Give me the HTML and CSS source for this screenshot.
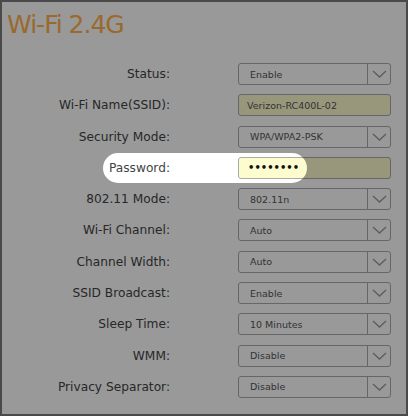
FILE: index.html
```html
<!DOCTYPE html>
<html>
<head>
<meta charset="utf-8">
<link rel="stylesheet" href="styles.css">
</head>
<body>
<div class="screen">
  <div class="frame">
    <h1 class="title">Wi-Fi 2.4G</h1>
    <div class="form">
      <div class="label">Status:</div>
      <div class="select"><span class="val">Enable</span><span class="arrow"><svg width="15" height="8" viewBox="0 0 15 8"><path d="M1 1 L7.5 7 L14 1" fill="none" stroke="#9a9a9a" stroke-width="1.3"/></svg></span></div>

      <div class="label">Wi-Fi Name(SSID):</div>
      <div class="input"><span class="val">Verizon-RC400L-02</span></div>

      <div class="label">Security Mode:</div>
      <div class="select"><span class="val">WPA/WPA2-PSK</span><span class="arrow"><svg width="15" height="8" viewBox="0 0 15 8"><path d="M1 1 L7.5 7 L14 1" fill="none" stroke="#9a9a9a" stroke-width="1.3"/></svg></span></div>

      <div class="label">Password:</div>
      <div class="input"><span class="dots">••••••••</span></div>

      <div class="label">802.11 Mode:</div>
      <div class="select"><span class="val">802.11n</span><span class="arrow"><svg width="15" height="8" viewBox="0 0 15 8"><path d="M1 1 L7.5 7 L14 1" fill="none" stroke="#9a9a9a" stroke-width="1.3"/></svg></span></div>

      <div class="label">Wi-Fi Channel:</div>
      <div class="select"><span class="val">Auto</span><span class="arrow"><svg width="15" height="8" viewBox="0 0 15 8"><path d="M1 1 L7.5 7 L14 1" fill="none" stroke="#9a9a9a" stroke-width="1.3"/></svg></span></div>

      <div class="label">Channel Width:</div>
      <div class="select"><span class="val">Auto</span><span class="arrow"><svg width="15" height="8" viewBox="0 0 15 8"><path d="M1 1 L7.5 7 L14 1" fill="none" stroke="#9a9a9a" stroke-width="1.3"/></svg></span></div>

      <div class="label">SSID Broadcast:</div>
      <div class="select"><span class="val">Enable</span><span class="arrow"><svg width="15" height="8" viewBox="0 0 15 8"><path d="M1 1 L7.5 7 L14 1" fill="none" stroke="#9a9a9a" stroke-width="1.3"/></svg></span></div>

      <div class="label">Sleep Time:</div>
      <div class="select"><span class="val">10 Minutes</span><span class="arrow"><svg width="15" height="8" viewBox="0 0 15 8"><path d="M1 1 L7.5 7 L14 1" fill="none" stroke="#9a9a9a" stroke-width="1.3"/></svg></span></div>

      <div class="label">WMM:</div>
      <div class="select"><span class="val">Disable</span><span class="arrow"><svg width="15" height="8" viewBox="0 0 15 8"><path d="M1 1 L7.5 7 L14 1" fill="none" stroke="#9a9a9a" stroke-width="1.3"/></svg></span></div>

      <div class="label">Privacy Separator:</div>
      <div class="select"><span class="val">Disable</span><span class="arrow"><svg width="15" height="8" viewBox="0 0 15 8"><path d="M1 1 L7.5 7 L14 1" fill="none" stroke="#9a9a9a" stroke-width="1.3"/></svg></span></div>
    </div>
  </div>
  <div class="spot"></div>
</div>
</body>
</html>
```

FILE: styles.css
```css
html, body {
  margin: 0;
  padding: 0;
}
body {
  font-family: "DejaVu Sans", sans-serif;
  background: #fff;
}
.screen {
  position: relative;
  width: 408px;
  height: 416px;
  overflow: hidden;
}
.frame {
  box-sizing: border-box;
  width: 408px;
  height: 416px;
  border: 2px solid #7c7c7c;
  background: #fff;
  padding: 8px 0 0 5px;
}
.title {
  margin: 0;
  font-weight: normal;
  font-size: 25px;
  line-height: 29px;
  letter-spacing: -1px;
  color: #ffb04c;
}
.form {
  margin-top: 24px;
  display: grid;
  grid-template-columns: 163px 153px;
  column-gap: 68px;
  row-gap: 9.3px;
}
.label {
  height: 22px;
  line-height: 22px;
  text-align: right;
  font-size: 12.2px;
  color: #444;
  white-space: nowrap;
}
.select, .input {
  box-sizing: border-box;
  height: 22px;
  border: 1px solid #aaa;
  border-radius: 3px;
  display: flex;
  align-items: center;
  font-size: 9.5px;
  color: #555;
  background: #fff;
}
.select .val {
  flex: 1;
  padding-left: 11px;
}
.input {
  background: #fdfcce;
}
.input .val {
  padding-left: 8px;
}
.arrow {
  width: 22px;
  height: 100%;
  border-left: 1px solid #aaa;
  display: flex;
  align-items: center;
  justify-content: center;
}
.dots {
  padding-left: 9px;
  font-size: 10px;
  font-weight: bold;
  color: #111;
  letter-spacing: 0px;
}
.spot {
  position: absolute;
  left: 103px;
  top: 153px;
  width: 204px;
  height: 30px;
  border-radius: 15px;
  box-shadow: 0 0 2px 1000px rgba(0, 0, 0, 0.4);
  pointer-events: none;
}
```
